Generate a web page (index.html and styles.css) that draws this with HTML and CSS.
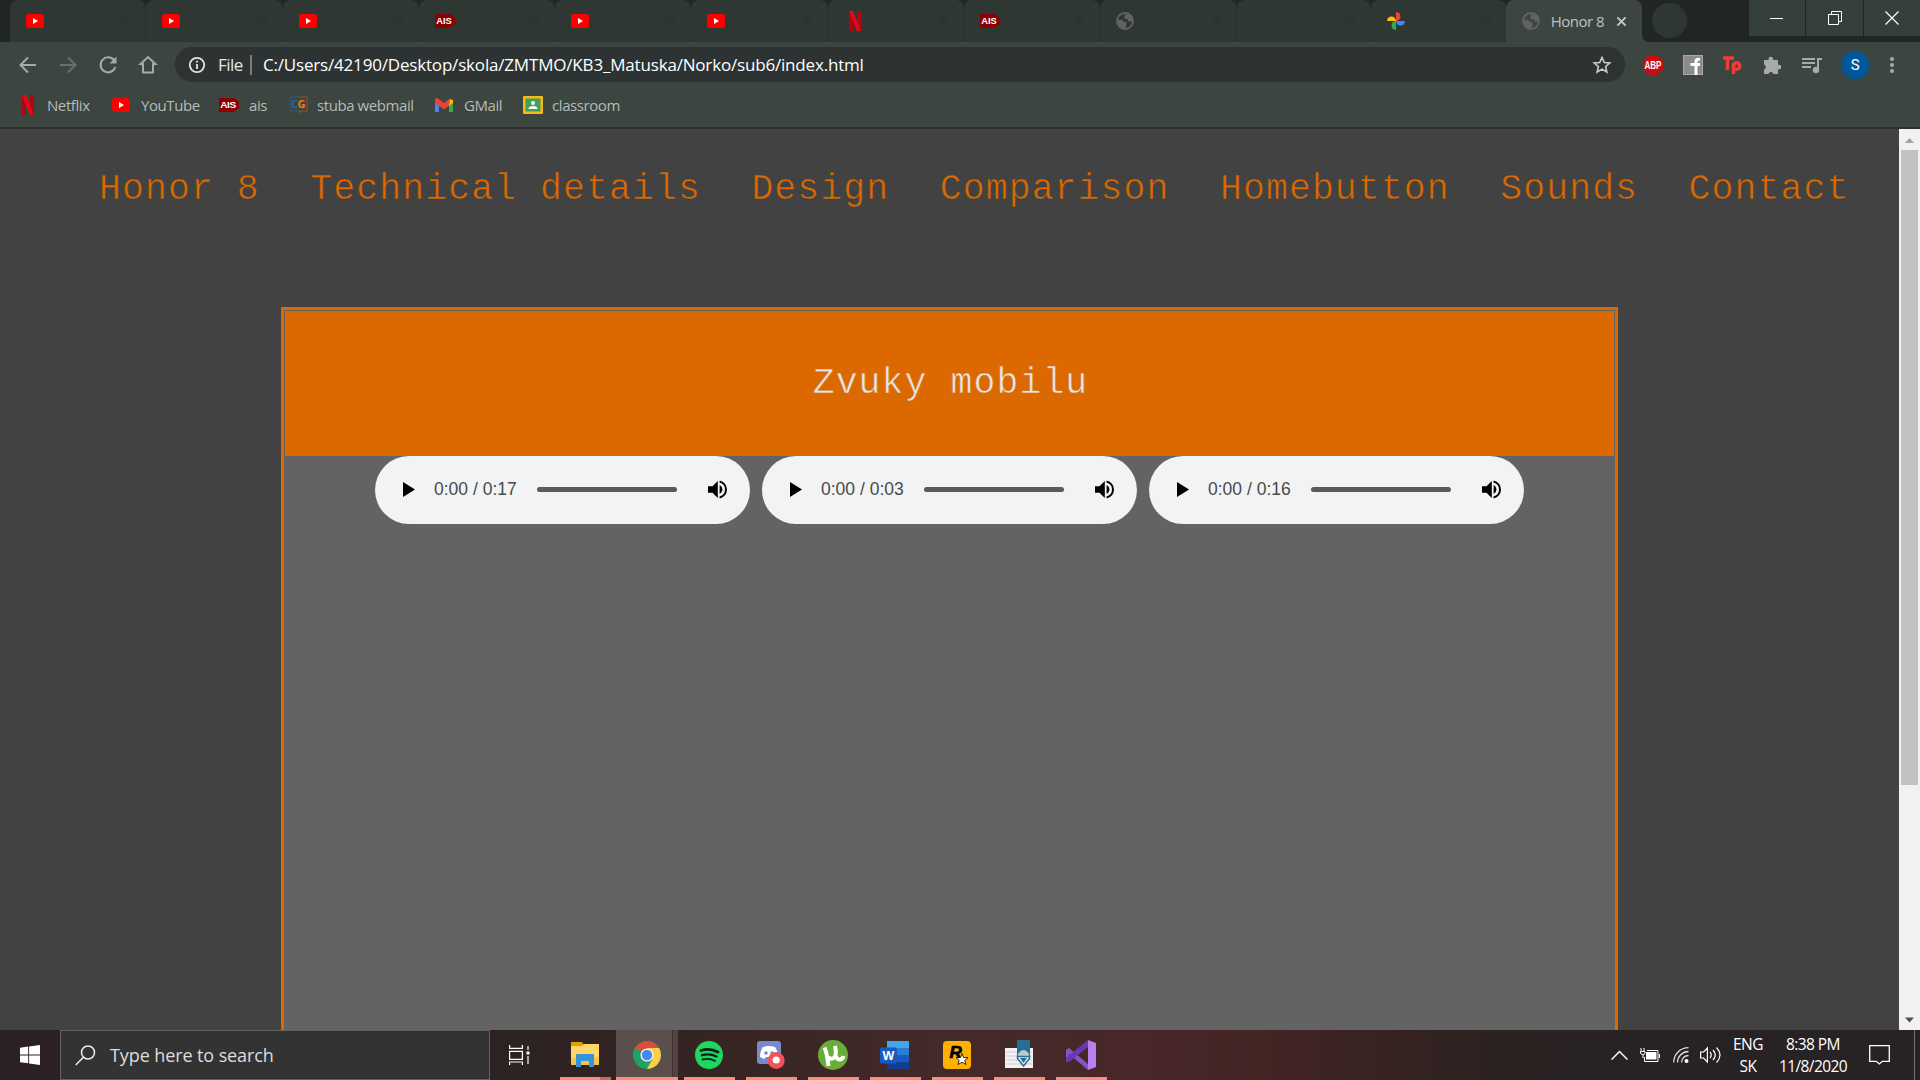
FILE: index.html
```html
<!DOCTYPE html>
<html lang="en">
<head>
<meta charset="utf-8">
<title>Honor 8</title>
<link rel="stylesheet" href="styles.css">
</head>
<body>
<svg class="defs" aria-hidden="true">
  <symbol id="yt" viewBox="0 0 18 14"><rect width="18" height="14" rx="3" fill="#f00"/><path d="M7 4v6l5-3z" fill="#fff"/></symbol>
  <symbol id="netflix" viewBox="0 0 12 20"><path d="M0 0h4v20H0zM8 0h4v20H8z" fill="#b1060f"/><path d="M0 0h4l8 20H8z" fill="#e50914"/></symbol>
  <symbol id="ais" viewBox="0 0 20 14"><path d="M0 0h15l5 4v6l-5 4H0z" fill="#8b0000"/><text x="1.2" y="10.4" font-size="9.5" font-weight="700" fill="#fff" textLength="15.5" lengthAdjust="spacingAndGlyphs">AIS</text></symbol>
  <symbol id="globe" viewBox="0 0 18 18"><circle cx="9" cy="9" r="8" fill="none" stroke="#5f6368" stroke-width="1.8"/><path d="M1 7.500l5 .5 2 2h2.500v3L9 16.500 3 15z M10 1.500L8.500 4v3h3l1 2.500h4.500L16 4z" fill="#5f6368"/></symbol>
  <symbol id="photos" viewBox="0 0 18 18"><path d="M9 0a4.500 4.500 0 0 1 0 9z" fill="#ea4335"/><path d="M18 9a4.500 4.500 0 0 1-9 0z" fill="#4285f4"/><path d="M9 18a4.500 4.500 0 0 1 0-9z" fill="#34a853"/><path d="M0 9a4.500 4.500 0 0 1 9 0z" fill="#fbbc04"/></symbol>
  <symbol id="x" viewBox="0 0 12 12"><path d="M1.500 1.500l9 9M10.500 1.500l-9 9" stroke="currentColor" stroke-width="2" fill="none"/></symbol>
  <symbol id="speaker" viewBox="0 0 19 19"><path d="M0 6.300h4.500L9.800 1v17L4.500 12.700H0z"/><path d="M11.600 5a5 5 0 0 1 0 9z"/><path d="M11.600 1.500a8.200 8.200 0 0 1 0 16" fill="none" stroke="#000" stroke-width="2"/></symbol>
</svg>

<header class="browser">
  <div class="tabstrip">
    <div class="tab"><svg class="i-yt"><use href="#yt"/></svg><svg class="close"><use href="#x"/></svg></div>
    <div class="tab"><svg class="i-yt"><use href="#yt"/></svg><svg class="close"><use href="#x"/></svg></div>
    <div class="tab"><svg class="i-yt"><use href="#yt"/></svg><svg class="close"><use href="#x"/></svg></div>
    <div class="tab"><svg class="i-ais"><use href="#ais"/></svg><svg class="close"><use href="#x"/></svg></div>
    <div class="tab"><svg class="i-yt"><use href="#yt"/></svg><svg class="close"><use href="#x"/></svg></div>
    <div class="tab"><svg class="i-yt"><use href="#yt"/></svg><svg class="close"><use href="#x"/></svg></div>
    <div class="tab"><svg class="i-netflix tab-n"><use href="#netflix"/></svg><svg class="close"><use href="#x"/></svg></div>
    <div class="tab"><svg class="i-ais"><use href="#ais"/></svg><svg class="close"><use href="#x"/></svg></div>
    <div class="tab"><svg class="i-18"><use href="#globe"/></svg><svg class="close"><use href="#x"/></svg></div>
    <div class="tab narrow"><svg class="close"><use href="#x"/></svg></div>
    <div class="tab narrow last"><svg class="i-18"><use href="#photos"/></svg><svg class="close"><use href="#x"/></svg></div>
    <div class="tab active"><svg class="i-18"><use href="#globe"/></svg><span class="tab-title">Honor 8</span><svg class="close"><use href="#x"/></svg></div>
    <svg class="flare" width="8" height="8"><path d="M0 0q0 8 8 8H0z" fill="#3c4540"/></svg>
    <div class="newtab"></div>
    <div class="wincontrols">
      <div class="wc"><svg width="14" height="14"><path d="M0 7.500h13" stroke="#fff"/></svg></div>
      <div class="wc"><svg width="14" height="14" fill="none" stroke="#fff"><path d="M.5 3.500h10v10H.5zM3.500 3V.5h10v10H11"/></svg></div>
      <div class="wc"><svg width="14" height="14"><path d="M.5.5l13 13M13.500.5l-13 13" stroke="#fff" stroke-width="1.200"/></svg></div>
    </div>
  </div>

  <div class="toolbar">
    <svg class="nav-icon" viewBox="0 0 20 20"><path d="M18 10H3M10 2.500L2.500 10l7.500 7.500"/></svg>
    <svg class="nav-icon dim" viewBox="0 0 20 20"><path d="M2 10h15M10 2.500l7.500 7.500-7.500 7.500"/></svg>
    <svg class="nav-icon" viewBox="0 0 20 20"><path d="M16 5.200A7.500 7.500 0 1 0 17.300 12"/><path d="M18.500 1.500v7h-7z" fill="#a7aaa8" stroke="none"/></svg>
    <svg class="nav-icon" viewBox="0 0 20 20"><path d="M5 17.500V9H2.500L10 2l7.500 7H15v8.500z"/></svg>
    <div class="omnibox">
      <svg width="18" height="18" viewBox="0 0 18 18" fill="none" stroke="#e3e5e6" stroke-width="1.800"><circle cx="9" cy="9" r="7.200"/><path d="M9 8v5M9 4.800v1.800"/></svg>
      <span class="scheme">File</span><span class="divider"></span><span class="url">C:/Users/42190/Desktop/skola/ZMTMO/KB3_Matuska/Norko/sub6/index.html</span>
      <svg class="star" width="20" height="20" viewBox="0 0 20 20"><path d="M10 2.500l2.300 5 5.500.5-4.200 3.600 1.300 5.400-4.900-2.900L5.100 17l1.300-5.400L2.200 8l5.500-.5z" fill="none" stroke="#c8cacb" stroke-width="1.600"/></svg>
    </div>
    <div class="extensions">
      <svg width="20" height="20"><path d="M6 0h8l6 6v8l-6 6H6l-6-6V6z" fill="#c70d0d"/><text x="1.500" y="13.700" font-size="10" font-weight="700" fill="#fff" textLength="17" lengthAdjust="spacingAndGlyphs">ABP</text></svg>
      <svg width="20" height="20"><rect x=".5" y=".5" width="19" height="19" fill="#8b8b8b" stroke="#a9a9a9"/><path d="M11.500 20v-9h-4V8h4V6.500q0-4.500 5.500-3.500v2.800q-2.500-.5-2.500 1.200V8H17v3h-2.500v9z" fill="#fff"/></svg>
      <svg width="20" height="20" fill="none" stroke="#f23a37" stroke-width="3.400"><path d="M1 3h11M5.500 3v12M11.500 19V8"/><circle cx="14.500" cy="11" r="3.300"/></svg>
      <svg width="20" height="20" viewBox="0 0 20 20"><path d="M2 5h4.500V4a2.300 2.300 0 1 1 4.600 0v1H16v4.800h1a2.300 2.300 0 1 1 0 4.600h-1V19h-4.600a2.600 2.600 0 0 0-5 0H2v-4.500a2.600 2.600 0 0 0 0-5z" fill="#a7aaa8"/></svg>
      <svg width="20" height="20" fill="none" stroke="#a7aaa8" stroke-width="2"><path d="M0 4h13M0 8h13M0 12h9M16 14V4h4"/><circle cx="14" cy="15" r="2.200" fill="#a7aaa8"/></svg>
      <span class="avatar">S</span>
      <svg width="6" height="20" fill="#a7aaa8"><circle cx="3" cy="4" r="2"/><circle cx="3" cy="10" r="2"/><circle cx="3" cy="16" r="2"/></svg>
    </div>
  </div>

  <div class="bookmarks">
    <a class="bm bm-n"><svg class="i-netflix"><use href="#netflix"/></svg><span>Netflix</span></a>
    <a class="bm bm-yt"><svg class="i-yt"><use href="#yt"/></svg><span>YouTube</span></a>
    <a class="bm bm-ais"><svg class="i-ais"><use href="#ais"/></svg><span>ais</span></a>
    <a class="bm bm-cg"><svg width="20" height="18"><path d="M9 1H1v14h7" fill="none" stroke="#315c83"/><path d="M10 1h8v14h-6l-2 2v-3" fill="none" stroke="#8b572c"/><text x="2" y="12" font-size="11" font-weight="700" fill="#29659a">C</text><text x="8.500" y="12" font-size="11" font-weight="700" fill="#f07d12">G</text></svg><span>stuba webmail</span></a>
    <a class="bm bm-gm"><svg width="18" height="14" viewBox="0 0 18 14"><path d="M0 2v12h4V5z" fill="#4285f4"/><path d="M18 2v12h-4V5z" fill="#34a853"/><path d="M14 1l4 1v3l-4 3z" fill="#fbbc04"/><path d="M0 2q0-3 3-1.500l6 4.500 6-4.500L14 8l-5 3.500L0 5z" fill="#ea4335"/></svg><span>GMail</span></a>
    <a class="bm bm-cl"><svg width="20" height="18"><rect width="20" height="18" rx="1" fill="#f5ba14"/><rect x="2.500" y="2.500" width="15" height="13" fill="#43a05a"/><circle cx="10" cy="7" r="2" fill="#fff"/><path d="M5.500 13q0-3 4.500-3t4.500 3z" fill="#fff"/></svg><span>classroom</span></a>
  </div>
</header>

<div class="viewport">
  <div class="page">
    <nav class="menu">
      <a>Honor 8</a><a>Technical details</a><a>Design</a><a>Comparison</a><a>Homebutton</a><a>Sounds</a><a>Contact</a>
    </nav>
    <main class="box">
      <h1 class="title">Zvuky mobilu</h1>
      <div class="players">
        <div class="player"><svg class="play"><path d="M0 0v15l12-7.500z"/></svg><span class="time">0:00 / 0:17</span><span class="track"></span><svg class="vol"><use href="#speaker"/></svg></div>
        <div class="player"><svg class="play"><path d="M0 0v15l12-7.500z"/></svg><span class="time">0:00 / 0:03</span><span class="track"></span><svg class="vol"><use href="#speaker"/></svg></div>
        <div class="player"><svg class="play"><path d="M0 0v15l12-7.500z"/></svg><span class="time">0:00 / 0:16</span><span class="track"></span><svg class="vol"><use href="#speaker"/></svg></div>
      </div>
    </main>
  </div>
  <div class="scrollbar">
    <svg width="21" height="21"><path d="M6 14h9L10.500 9z" fill="#a3a3a3"/></svg>
    <div class="thumb"></div>
    <svg width="21" height="21"><path d="M6 8.500h9l-4.500 5z" fill="#505050"/></svg>
  </div>
</div>

<footer class="taskbar">
  <div class="start"><svg width="20" height="20" fill="#fff"><path d="M0 2.800L8.200 1.600v7.900H0zM9.100 1.500L20 0v9.500H9.100zM0 10.400h8.200v7.900L0 17.200zM9.100 10.400H20V20L9.100 18.400z"/></svg></div>
  <div class="search"><svg width="21" height="21" fill="none" stroke="#eee" stroke-width="1.500"><circle cx="13" cy="7.500" r="6.500"/><path d="M8.400 12.200L.8 20"/></svg><span>Type here to search</span></div>
  <div class="taskview"><svg width="21" height="20" fill="none" stroke="#fff" stroke-width="1.200"><path d="M.6 0v3.400h12.800V0M.6 6.400h12.800v8H.6zM.6 20v-3h12.800v3M19 1v4M19 11v8"/><path d="M17.500 6.500h3v3h-3z" fill="#fff" stroke="none"/></svg></div>
  <div class="apps">
    <div class="app stacked"><svg width="28" height="28"><path d="M0 1h11l2 3v5H0z" fill="#e0a000"/><path d="M0 5h11l2-2h15v20H0z" fill="#ffd767"/><path d="M0 17h28v7H0z" fill="#f6c443"/><path d="M5 14q0-1 1-1h16q1 0 1 1v12h-5v-6h-8v6H5z" fill="#3592dc"/></svg></div>
    <div class="app current"><svg width="28" height="28" viewBox="0 0 28 28"><circle cx="14" cy="14" r="14" fill="#1ea362"/><path d="M14 14L1.900 7A14 14 0 0 1 26.100 7z" fill="#dd4b3e"/><path d="M14 7h12.100A14 14 0 0 1 14 28l6-11z" fill="#ffce44"/><circle cx="14" cy="14" r="6.600" fill="#f1f1f1"/><circle cx="14" cy="14" r="5.200" fill="#4688f4"/></svg></div>
    <div class="app"><svg width="28" height="28" fill="none" stroke="#101f16" stroke-linecap="round"><circle cx="14" cy="14" r="14" fill="#1ed760" stroke="none"/><path d="M6 9.500q8.500-3 17 1.500" stroke-width="2.800"/><path d="M7 14.200q7.500-2.200 14.500 1.300" stroke-width="2.300"/><path d="M7.500 18.500q6.500-1.800 12.500 1.300" stroke-width="1.900"/></svg></div>
    <div class="app"><svg width="28" height="28"><path d="M3 0h18q3 0 3 3v21l-3-1H3q-3 0-3-3V3q0-3 3-3z" fill="#7889cc"/><path d="M6 6q6-2 12 0 3 4 3 10l-4 2-2-2H9l-2 2-4-2q0-6 3-10z" fill="#fff"/><circle cx="9" cy="12" r="1.800" fill="#7889cc"/><circle cx="15" cy="12" r="1.800" fill="#7889cc"/><circle cx="19.200" cy="19.500" r="8.500" fill="#f05459"/><circle cx="19.200" cy="19" r="3.600" fill="#fff"/></svg></div>
    <div class="app"><svg width="30" height="30"><circle cx="15" cy="15" r="15" fill="#68ad38"/><path d="M6.500 7.500Q9 13 10.500 26M9 17q6 4 8.500-1.500 1-4-.5-9.500M17.500 14q1 6 4 5.500 3 0 4-3.500" fill="none" stroke="#fff" stroke-width="4"/></svg></div>
    <div class="app"><svg width="30" height="28"><path d="M7 0h22v7H7z" fill="#41a5ee"/><path d="M7 7h22v7H7z" fill="#2b7cd3"/><path d="M7 14h22v7H7z" fill="#185abd"/><path d="M7 21h22v7H7z" fill="#103f91"/><rect y="6.500" width="17" height="16" rx="1.500" fill="#185abd"/><text x="2.500" y="19" font-size="12.500" font-weight="700" fill="#fff">W</text></svg></div>
    <div class="app"><svg width="28" height="28"><rect width="28" height="28" rx="4" fill="#ffb000"/><text x="6.500" y="17" font-size="17" font-weight="700" font-style="italic" fill="#000" stroke="#000" stroke-width=".7">R</text><path d="M19 12.500l1.500 4 4.500.2-3.300 2.700L23 23.500l-4-2.300-4 2.300 1.200-4-3.200-2.800 4.500-.2z" fill="#fff" stroke="#000" stroke-width=".8"/></svg></div>
    <div class="app"><svg width="28" height="30"><path d="M0 8h28v20H0z" fill="#f2f2f2"/><path d="M1 12h26M1 16h26M1 20h26M1 24h26" stroke="#c9ced2"/><path d="M12 0h13v16H12z" fill="#286e92"/><path d="M13 14q5.500-8 11 0v2H13z" fill="#b7cbd3"/><path d="M12.500 16.500h12v2L18.500 26l-6-7.500z" fill="#e8eef1" stroke="#286e92" stroke-width="1.500"/><path d="M15 18h7l-3.500 5z" fill="#286e92"/></svg></div>
    <div class="app"><svg width="30" height="30"><path d="M0 10l3-2L22 24v6L3 14v7l-3 1z" fill="#8553c4"/><path d="M3 14v7l4-3.500z" fill="#452a52"/><path d="M22 0v7L3 22l-3-2v-2z" fill="#6b35b5"/><path d="M22 0l8 3v24l-8 3z" fill="#b780ee"/></svg></div>
  </div>
  <div class="tray">
    <svg class="t-chev" width="17" height="10" fill="none" stroke="#fff" stroke-width="1.500"><path d="M.5 9.500l8-8 8 8"/></svg>
    <svg class="t-bat" width="20" height="14"><path d="M6 4h10.500v7.500H6z" fill="#fff"/><path d="M7 2.500h11v11H4.500V9M19.500 6v4M1 0v3M4 0v3M.5 3.500h4.500v2q-2 2.500-4.500 0zM3 7v3" fill="none" stroke="#fff"/></svg>
    <svg class="t-wifi" width="16" height="16" fill="none" stroke="#ddd" stroke-width="1.300"><path d="M.7 15.500A14.800 14.800 0 0 1 15.500.7M4.500 15.500A11 11 0 0 1 15.500 4.500M8.500 15.500a7 7 0 0 1 7-7"/><circle cx="13.500" cy="14" r="2" fill="#fff" stroke="none"/></svg>
    <svg class="t-vol" width="21" height="18" fill="none" stroke="#fff" stroke-width="1.200"><path d="M.6 6h3L7.400 2v14L3.600 12h-3zM10 6q2.500 3 0 6M13 4q4.500 5 0 10M16.500 1.500q7 7.500 0 15"/></svg>
    <div class="t-lang"><span>ENG</span><span>SK</span></div>
    <div class="t-clock"><span>8:38 PM</span><span>11/8/2020</span></div>
    <svg class="t-note" width="21" height="20" fill="none" stroke="#fff" stroke-width="1.300"><path d="M.7.7h19.600v15.600h-7L10.300 19l-3-2.700H.7z"/></svg>
    <div class="peek"></div>
  </div>
</footer>
</body>
</html>
```
FILE: styles.css
```css
* { box-sizing: border-box; }
body {
  margin: 0; width: 1920px; height: 1080px; overflow: hidden;
  display: flex; flex-direction: column;
  background: #424242; font-family: "Open Sans", "Noto Sans", sans-serif;
}
svg { display: block; flex: none; }
.defs { display: none; }
span { white-space: nowrap; }

.browser { height: 129px; flex: none; background: #3c4540; border-bottom: 2px solid #27302b; }
.tabstrip { height: 42px; display: flex; align-items: flex-start; padding-left: 10px; background: #212622; }
.tab {
  width: 136.300px; height: 42px; flex: none; display: flex; align-items: center;
  padding: 0 14px 0 16px; background: #2f3732; border-radius: 8px 8px 0 0; color: #2c342f;
  border-right: 1px solid #2a322d;
}
.tab.narrow { width: 134.500px; }
.tab.last { border-right: 0; }
.tab .close { margin-left: auto; width: 11px; height: 11px; }
.tab.active { width: 136px; background: #3c4540; color: #c3c9cc; border: 0; padding-right: 15px; }
.tab-title { margin-left: 11px; font-size: 15px; letter-spacing: -.5px; color: #bcc3c8; }
.i-yt { width: 18px; height: 14px; }
.i-ais { width: 20px; height: 14px; font-family: "Liberation Sans", sans-serif; }
.i-netflix { width: 12px; height: 20px; }
.tab-n { margin-left: 5px; }
.i-18 { width: 18px; height: 18px; }
.flare { align-self: flex-end; }
.newtab { width: 35px; height: 35px; border-radius: 50%; margin: 3px 0 0 2px; background: #2f3732; }
.wincontrols { margin-left: auto; display: flex; gap: 1px; }
.wc { width: 56px; height: 36px; display: flex; align-items: center; justify-content: center; background: #36403a; }
.wc:nth-child(2) { width: 57px; }

.toolbar { height: 45px; display: flex; align-items: center; padding: 0 12px 0 18px; }
.nav-icon { width: 20px; height: 20px; margin-right: 20px; fill: none; stroke: #a7aaa8; stroke-width: 2; }
.nav-icon.dim { stroke: #69706c; }
.nav-icon:nth-child(4) { margin-right: 17px; }
.omnibox {
  width: 1450px; height: 35px; border-radius: 18px; background: #2d3333;
  display: flex; align-items: center; padding: 0 13px 0 13px; color: #fff; font-size: 17px;
}
.scheme { margin-left: 12px; letter-spacing: -.5px; color: #e3e5e6; }
.divider { width: 2px; height: 20px; background: #777b7b; margin: 0 11px 0 7px; }
.url { letter-spacing: -.18px; }
.star { margin-left: auto; }
.extensions { display: flex; align-items: center; justify-content: space-between; width: 252px; margin-left: 18px; font-family: "Liberation Sans", sans-serif; }
.avatar { width: 28px; height: 28px; border-radius: 50%; background: #00579c; color: #fff; text-align: center; font: 15px/28px Roboto, sans-serif; }

.bookmarks { height: 35px; display: flex; align-items: center; padding-left: 22px; font-size: 15px; letter-spacing: -.42px; color: #b5bbb8; }
.bm { display: flex; align-items: center; }
.bm span { display: block; }
.bm-n { width: 90px; gap: 13px; }
.bm-yt { width: 107px; gap: 11px; }
.bm-ais { width: 70px; gap: 10px; }
.bm-cg { width: 146px; gap: 8px; }
.bm-gm { width: 88px; gap: 11px; }
.bm-cl { gap: 9px; }

.viewport { height: 901px; flex: none; display: flex; }
.page { width: 1899px; display: flex; flex-direction: column; align-items: center; overflow: hidden; }
.menu {
  width: 100%; height: 178px; flex: none; display: flex; gap: 50.500px; padding: 39px 0 0 99px;
}
.menu a, .title {
  white-space: nowrap; font: 36.500px/44px "Liberation Mono", monospace; letter-spacing: 1.070px; color: #db6900;
  -webkit-text-stroke: .6px #424242;
}
.box { width: 1337px; flex: 1; border: 3px solid #db6900; border-bottom: 0; background: #636363; }
.title {
  margin: 1px 1px 0; height: 145px; padding: 51px 0 0 2px; text-align: center; font-weight: 400;
  background: #db6900; color: #e6e6e6; -webkit-text-stroke-color: #db6900;
}
.players { display: flex; justify-content: center; gap: 12px; }
.player { width: 375px; height: 68px; border-radius: 34px; background: #f1f3f4; display: flex; align-items: center; padding: 0 0 1px 28px; }
.play { width: 12px; height: 15px; }
.time { width: 103px; margin-left: 19px; font: 17.500px "Liberation Sans", sans-serif; color: #4a4a4a; padding-bottom: 1px; }
.track { width: 140px; height: 5px; border-radius: 3px; background: #5a5a5a; }
.vol { width: 19px; height: 19px; margin-left: 31px; }
.scrollbar { width: 21px; background: #f1f1f1; display: flex; flex-direction: column; align-items: center; }
.thumb { width: 17px; height: 635px; background: #c1c1c1; margin-bottom: auto; }

.taskbar {
  height: 50px; display: flex; flex: none; color: #fff;
  background: linear-gradient(90deg, #2a2025 0, #2c2222 500px, #342423 700px, #432a29 930px, #482728 1150px, #422423 1270px, #2d2221 1480px, #282223 1600px, #272224 100%);
}
.start { width: 60px; display: flex; align-items: center; justify-content: center; padding-bottom: 1px; }
.search { width: 430px; height: 50px; border: 1px solid #626262; background: #333; display: flex; align-items: center; padding-left: 14px; }
.search span { font-size: 18px; margin-left: 14px; letter-spacing: -.1px; color: #ddd; }
.taskview { width: 63px; display: flex; align-items: center; padding-left: 19px; }
.apps { display: flex; padding-left: 1px; }
.app { width: 62px; height: 50px; display: flex; flex-direction: column; align-items: center; justify-content: center; padding-top: 3px; font-family: "Liberation Sans", sans-serif; }
.app svg { margin: auto; }
.app::after { content: ""; width: 51px; height: 3px; background: #ff8c73; }
.app.stacked::after { background: linear-gradient(90deg, #ff8c73 40px, #c46b5e 40px); }
.app.current { background: linear-gradient(90deg, #5b4f4e 56px, #3e3231 56px, #3e3231 57px, #514443 57px); }
.app.current::after { width: 62px; }
.tray { margin-left: auto; display: flex; align-items: center; font-size: 15.500px; letter-spacing: -.6px; }
.t-bat { margin-left: 12px; }
.t-wifi { margin-left: 13px; }
.t-vol { margin-left: 11px; }
.t-lang, .t-clock { display: flex; flex-direction: column; align-items: center; line-height: 22px; }
.t-lang { width: 42px; margin-left: 6px; }
.t-clock { width: 80px; margin-left: 4px; }
.t-note { margin-left: 16px; }
.peek { width: 6px; height: 50px; margin-left: 24px; border-left: 1px solid #77706f; }
```
